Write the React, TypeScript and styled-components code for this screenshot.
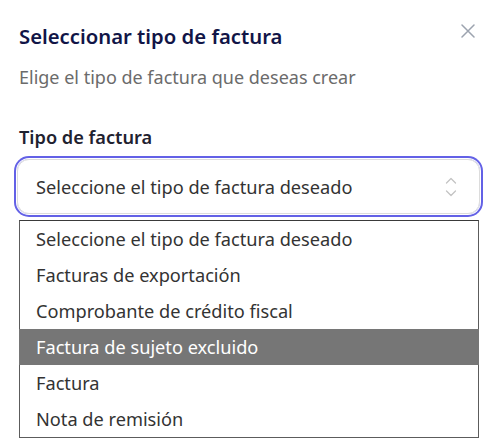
import * as React from "react"
import styled, { createGlobalStyle } from "styled-components"

const GlobalStyle = createGlobalStyle`
    html, body {
        margin: 0;
        padding: 0;
        background: #ffffff;
        font-family: "Noto Sans", "Open Sans", sans-serif;
    }
`

const Dialog = styled.div`
    position: relative;
    width: 490px;
    height: 442px;
    box-sizing: border-box;
    padding: 23px 10px 0 17px;
    overflow: hidden;
`

const Header = styled.div`
    display: flex;
    justify-content: space-between;
    align-items: flex-start;
`

const Title = styled.h2`
    margin: 0 0 0 2px;
    font-size: 20.3px;
    font-weight: 600;
    line-height: 26px;
    color: #111547;
`

const CloseButton = styled.button`
    border: none;
    background: none;
    padding: 0;
    margin: -4px 0 0 0;
    width: 24px;
    height: 24px;
    display: flex;
    align-items: center;
    justify-content: center;
    cursor: pointer;
`

const Subtitle = styled.p`
    margin: 15px 0 0 2px;
    font-size: 18px;
    line-height: 26px;
    color: #6b6b6b;
`

const Label = styled.label`
    display: block;
    margin: 34px 0 0 2px;
    font-size: 18.2px;
    font-weight: 600;
    line-height: 26px;
    color: #1f2230;
`

const SelectBox = styled.div`
    margin-top: 9px;
    width: 463px;
    height: 55px;
    box-sizing: border-box;
    border: 1px solid #dcdcdc;
    border-radius: 12px;
    box-shadow: 0 0 0 1px #ffffff, 0 0 0 3px #6361e6;
    display: flex;
    align-items: center;
    justify-content: space-between;
    padding: 0 22px 0 18px;
    font-size: 18.2px;
    color: #333333;
`

const OptionList = styled.ul`
    position: absolute;
    left: 19px;
    top: 220px;
    width: 460px;
    margin: 0;
    padding: 0;
    list-style: none;
    box-sizing: border-box;
    border: 1px solid #5c5c5c;
    border-top-color: #3a3a3a;
    background: #ffffff;
`

const Option = styled.li<{ active?: boolean }>`
    height: 36px;
    display: flex;
    align-items: center;
    font-size: 18.2px;
    color: ${p => p.active ? "#ffffff" : "#333333"};
    background: ${p => p.active ? "#767676" : "transparent"};
    margin: 0 ${p => p.active ? "-1px" : "0"};
    padding-left: ${p => p.active ? "17px" : "16px"};
`

const options = [
    "Seleccione el tipo de factura deseado",
    "Facturas de exportación",
    "Comprobante de crédito fiscal",
    "Factura de sujeto excluido",
    "Factura",
    "Nota de remisión",
]

const App = (): JSX.Element => {
    return (
        <>
            <GlobalStyle />
            <Dialog>
                <Header>
                    <Title>Seleccionar tipo de factura</Title>
                    <CloseButton aria-label="Cerrar">
                        <svg width="14" height="14" viewBox="0 0 14 14" fill="none" stroke="#9ca3af" strokeWidth="1.5" strokeLinecap="round">
                            <path d="M1 1L13 13M13 1L1 13" />
                        </svg>
                    </CloseButton>
                </Header>
                <Subtitle>Elige el tipo de factura que deseas crear</Subtitle>
                <Label>Tipo de factura</Label>
                <SelectBox>
                    <span>Seleccione el tipo de factura deseado</span>
                    <svg width="12" height="22" viewBox="0 0 12 22" fill="none" stroke="#c4c4c4" strokeWidth="1.3" strokeLinecap="round" strokeLinejoin="round">
                        <path d="M1.5 7L6 2.5L10.5 7" />
                        <path d="M1.5 15L6 19.5L10.5 15" />
                    </svg>
                </SelectBox>
                <OptionList>
                    {options.map((o, i) => (
                        <Option key={o} active={i === 3}>{o}</Option>
                    ))}
                </OptionList>
            </Dialog>
        </>
    )
}

export default App
